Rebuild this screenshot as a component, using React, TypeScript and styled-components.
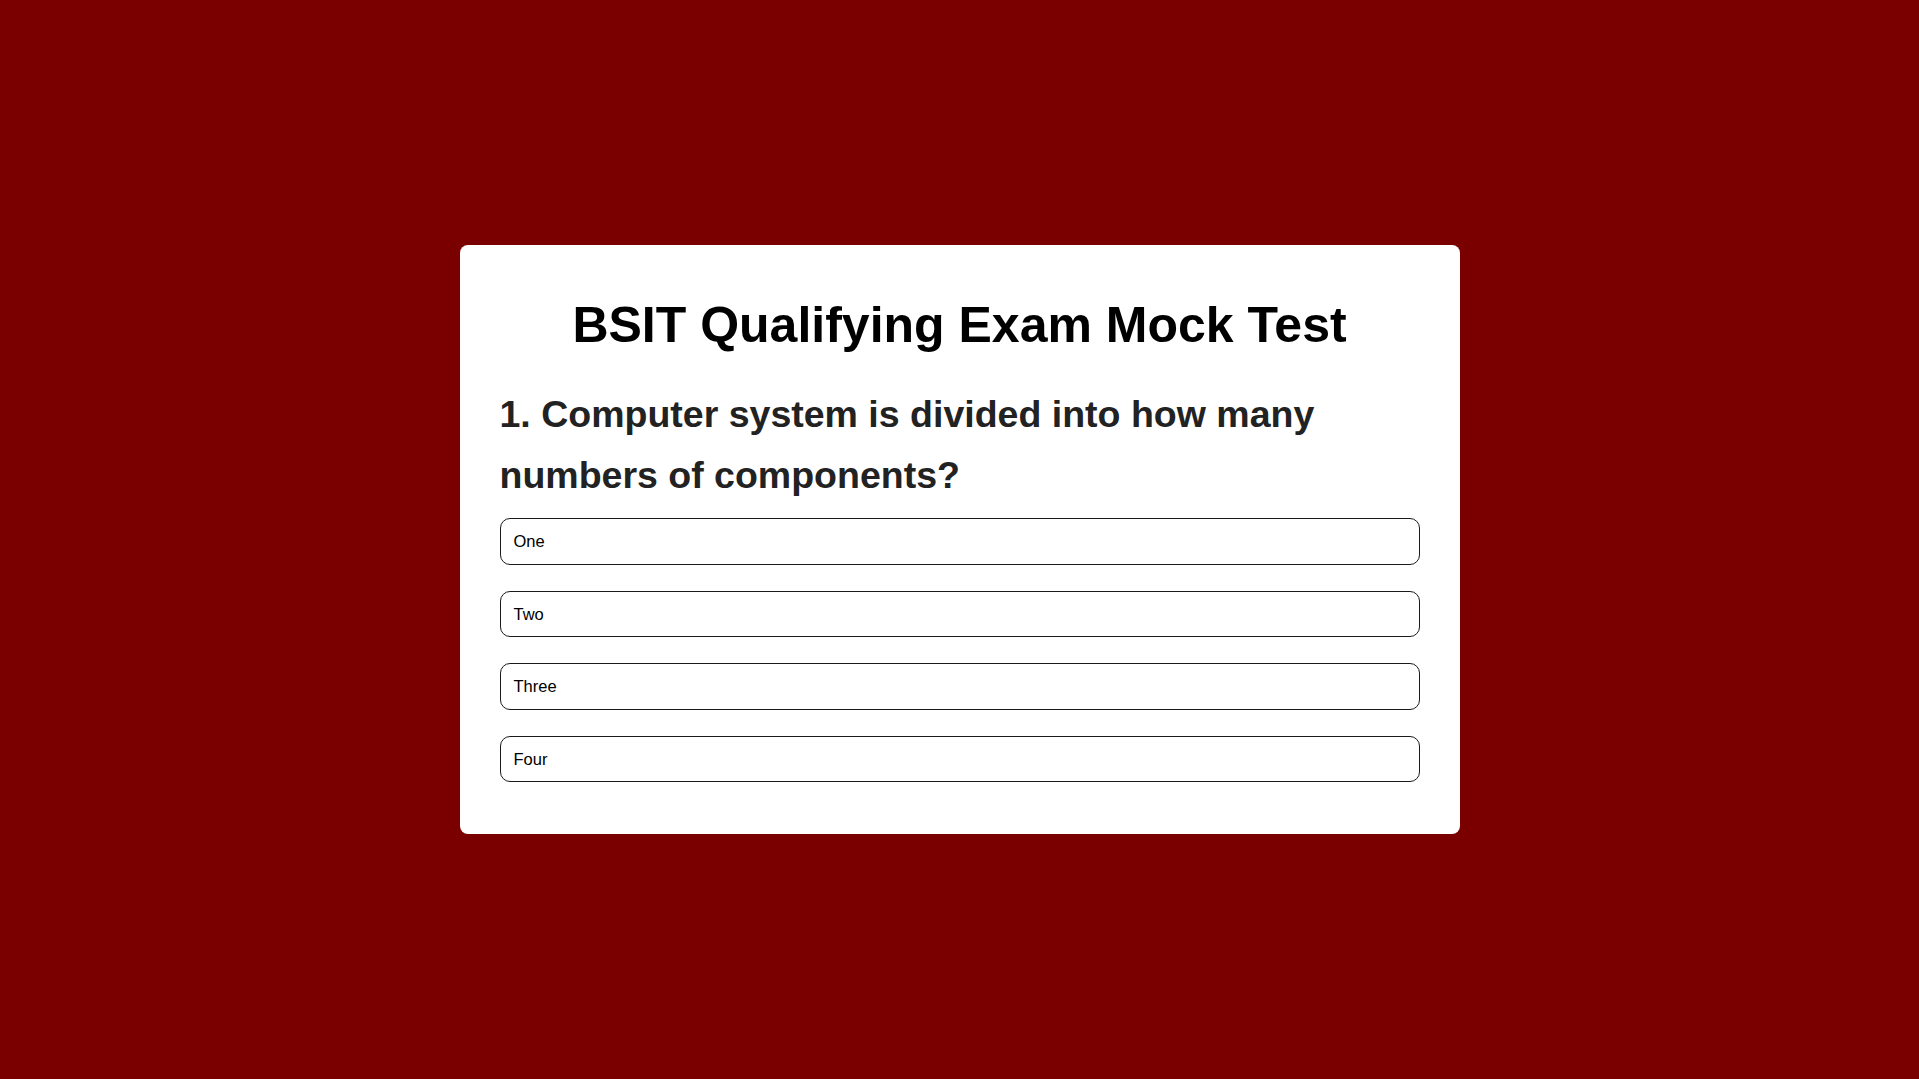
import styled, { createGlobalStyle } from "styled-components";

const options = ["One", "Two", "Three", "Four"];

const GlobalStyle = createGlobalStyle`
  * {
    box-sizing: border-box;
  }

  html,
  body {
    margin: 0;
    padding: 0;
    background-color: #7a0000;
    font-family: "Liberation Sans", Arial, sans-serif;
  }
`;

export default function App() {
  return (
    <>
      <GlobalStyle />
      <Page>
        <QuizCard>
          <Title>BSIT Qualifying Exam Mock Test</Title>

          <Question>1. Computer system is divided into how many numbers of components?</Question>

          <OptionList>
            {options.map((option, index) => (
              <OptionButton key={index}>{option}</OptionButton>
            ))}
          </OptionList>
        </QuizCard>
      </Page>
    </>
  );
}

const Page = styled.main`
  min-height: 100vh;
  display: flex;
  align-items: center;
  justify-content: center;
`;

const QuizCard = styled.section`
  width: 1000px;
  background-color: #ffffff;
  border-radius: 8px;
  padding: 51px 40px 52px;
`;

const Title = styled.h1`
  margin: 0;
  font-size: 50px;
  line-height: 58px;
  font-weight: 700;
  color: #000000;
  text-align: center;
`;

const Question = styled.h2`
  margin: 30px 0 0;
  font-size: 37.5px;
  line-height: 61px;
  font-weight: 700;
  color: #222222;
`;

const OptionList = styled.div`
  display: flex;
  flex-direction: column;
  gap: 26px;
  margin-top: 12px;
`;

const OptionButton = styled.button`
  display: block;
  width: 100%;
  height: 46.5px;
  padding: 1px 13px 0;
  background-color: #ffffff;
  border: 1px solid #1a1a1a;
  border-radius: 10px;
  font-family: "Liberation Sans", Arial, sans-serif;
  font-size: 16.5px;
  color: #000000;
  text-align: left;
  cursor: pointer;
`;
